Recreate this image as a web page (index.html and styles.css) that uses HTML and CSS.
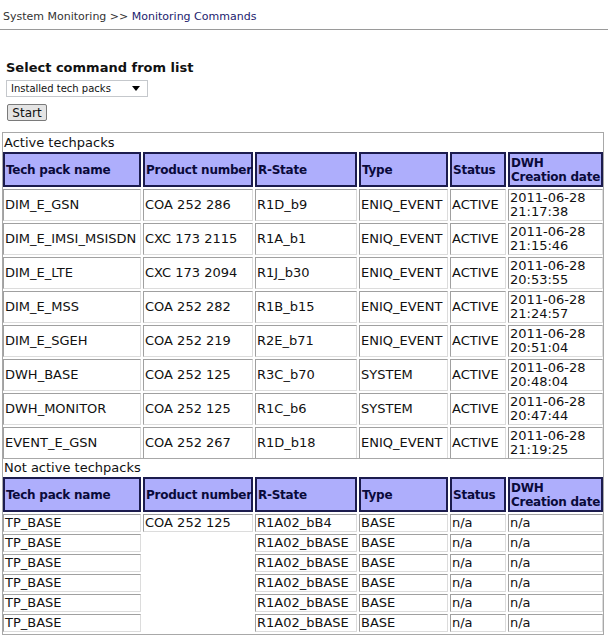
FILE: index.html
```html
<!DOCTYPE html>
<html>
<head>
<meta charset="utf-8">
<title>Monitoring Commands</title>
<link rel="stylesheet" href="styles.css">
</head>
<body>
<div class="crumb">System Monitoring &gt;&gt; <a class="crumb-link">Monitoring Commands</a></div>
<div class="rule"></div>
<div class="form">
  <h2 class="form-title">Select command from list</h2>
  <div class="select">
    <span class="select-text">Installed tech packs</span>
    <svg class="select-arrow" width="8" height="5" viewBox="0 0 8 5"><path d="M0 0H8L4 5Z" fill="#000"/></svg>
  </div>
  <button class="btn">Start</button>
</div>
<div class="panel">
  <section class="section">
    <div class="section-title">Active techpacks</div>
    <table class="grid grid-first">
      <thead>
        <tr>
          <th class="c1">Tech pack name</th>
          <th class="c2">Product number</th>
          <th class="c3">R-State</th>
          <th class="c4">Type</th>
          <th class="c5">Status</th>
          <th class="c6">DWH<br>Creation date</th>
        </tr>
      </thead>
      <tbody>
        <tr><td>DIM_E_GSN</td><td>COA 252 286</td><td>R1D_b9</td><td>ENIQ_EVENT</td><td>ACTIVE</td><td>2011-06-28<br>21:17:38</td></tr>
        <tr><td>DIM_E_IMSI_MSISDN</td><td>CXC 173 2115</td><td>R1A_b1</td><td>ENIQ_EVENT</td><td>ACTIVE</td><td>2011-06-28<br>21:15:46</td></tr>
        <tr><td>DIM_E_LTE</td><td>CXC 173 2094</td><td>R1J_b30</td><td>ENIQ_EVENT</td><td>ACTIVE</td><td>2011-06-28<br>20:53:55</td></tr>
        <tr><td>DIM_E_MSS</td><td>COA 252 282</td><td>R1B_b15</td><td>ENIQ_EVENT</td><td>ACTIVE</td><td>2011-06-28<br>21:24:57</td></tr>
        <tr><td>DIM_E_SGEH</td><td>COA 252 219</td><td>R2E_b71</td><td>ENIQ_EVENT</td><td>ACTIVE</td><td>2011-06-28<br>20:51:04</td></tr>
        <tr><td>DWH_BASE</td><td>COA 252 125</td><td>R3C_b70</td><td>SYSTEM</td><td>ACTIVE</td><td>2011-06-28<br>20:48:04</td></tr>
        <tr><td>DWH_MONITOR</td><td>COA 252 125</td><td>R1C_b6</td><td>SYSTEM</td><td>ACTIVE</td><td>2011-06-28<br>20:47:44</td></tr>
        <tr><td>EVENT_E_GSN</td><td>COA 252 267</td><td>R1D_b18</td><td>ENIQ_EVENT</td><td>ACTIVE</td><td>2011-06-28<br>21:19:25</td></tr>
      </tbody>
    </table>
  </section>
  <section class="section">
    <div class="section-title">Not active techpacks</div>
    <table class="grid">
      <thead>
        <tr>
          <th class="c1">Tech pack name</th>
          <th class="c2">Product number</th>
          <th class="c3">R-State</th>
          <th class="c4">Type</th>
          <th class="c5">Status</th>
          <th class="c6">DWH<br>Creation date</th>
        </tr>
      </thead>
      <tbody>
        <tr><td>TP_BASE</td><td>COA 252 125</td><td>R1A02_bB4</td><td>BASE</td><td>n/a</td><td>n/a</td></tr>
        <tr><td>TP_BASE</td><td></td><td>R1A02_bBASE</td><td>BASE</td><td>n/a</td><td>n/a</td></tr>
        <tr><td>TP_BASE</td><td></td><td>R1A02_bBASE</td><td>BASE</td><td>n/a</td><td>n/a</td></tr>
        <tr><td>TP_BASE</td><td></td><td>R1A02_bBASE</td><td>BASE</td><td>n/a</td><td>n/a</td></tr>
        <tr><td>TP_BASE</td><td></td><td>R1A02_bBASE</td><td>BASE</td><td>n/a</td><td>n/a</td></tr>
        <tr><td>TP_BASE</td><td></td><td>R1A02_bBASE</td><td>BASE</td><td>n/a</td><td>n/a</td></tr>
      </tbody>
    </table>
  </section>
</div>
</body>
</html>
```
FILE: styles.css
```css
* { box-sizing: border-box; }
html, body { margin: 0; padding: 0; background: #fff; }
body {
  font-family: "DejaVu Sans", Verdana, sans-serif;
  color: #000;
  overflow: hidden;
}
.crumb {
  margin-top: 10px;
  padding-left: 3px;
  font-size: 11px;
  line-height: 14px;
  color: #333;
}
.crumb-link { color: #22226e; text-decoration: none; }
.rule {
  margin-top: 5px;
  border-top: 1px solid #9a9a9a;
}
.form {
  padding-left: 7px;
  display: flex;
  flex-direction: column;
  align-items: flex-start;
}
.form-title {
  margin: 30px 0 0 -1px;
  font-size: 13px;
  line-height: 16px;
  font-weight: bold;
  color: #111;
}
.select {
  margin-top: 4px;
  width: 142px;
  height: 17px;
  border: 1px solid #c5c8cc;
  background: #fff;
  display: flex;
  align-items: center;
  justify-content: space-between;
  padding: 0 7px 0 4px;
  margin-left: -1px;
}
.select-text { font-size: 10px; line-height: 12px; color: #111; }
.select-arrow { display: block; }
.btn {
  margin-top: 7px;
  width: 40px;
  height: 17px;
  padding: 0;
  font-family: "DejaVu Sans", Verdana, sans-serif;
  font-size: 12px;
  line-height: 14px;
  color: #111;
  background: #e4e4e4;
  border: 1px solid #7a7a7a;
  border-radius: 2px;
}
.panel {
  margin: 11px 0 0 2px;
  width: 602px;
  border: 1px solid #a8a8a8;
}
.section + .section { border-top: 1px solid #a8a8a8; }
.section-title {
  font-size: 13px;
  line-height: 19px;
  padding-left: 1px;
  color: #111;
}
.section + .section .section-title { line-height: 18px; }
.grid {
  table-layout: fixed;
  border-collapse: separate;
  border-spacing: 2px;
  empty-cells: hide;
  margin: -2px -2px 0;
  width: 604px;
  font-size: 13px;
  line-height: 14px;
}
.grid-first { margin-bottom: -3px; }
.grid th {
  background: #aeaefc;
  border: 2px solid #1c1c4e;
  color: #0a0a3a;
  font-size: 12px;
  letter-spacing: -0.25px;
  font-weight: bold;
  text-align: left;
  padding: 1px 0 1px 1px;
  white-space: nowrap;
  overflow: visible;
  height: 35px;
}
.grid td {
  border: 1px solid;
  border-color: #a0a0a0 #dcdcdc #dcdcdc #a0a0a0;
  padding: 1px 0 1px 1px;
  white-space: nowrap;
  color: #111;
}
.c1 { width: 138px; }
.c2 { width: 110px; }
.c3 { width: 102px; }
.c4 { width: 89px; }
.c5 { width: 56px; }
.c6 { width: 95px; }
```
